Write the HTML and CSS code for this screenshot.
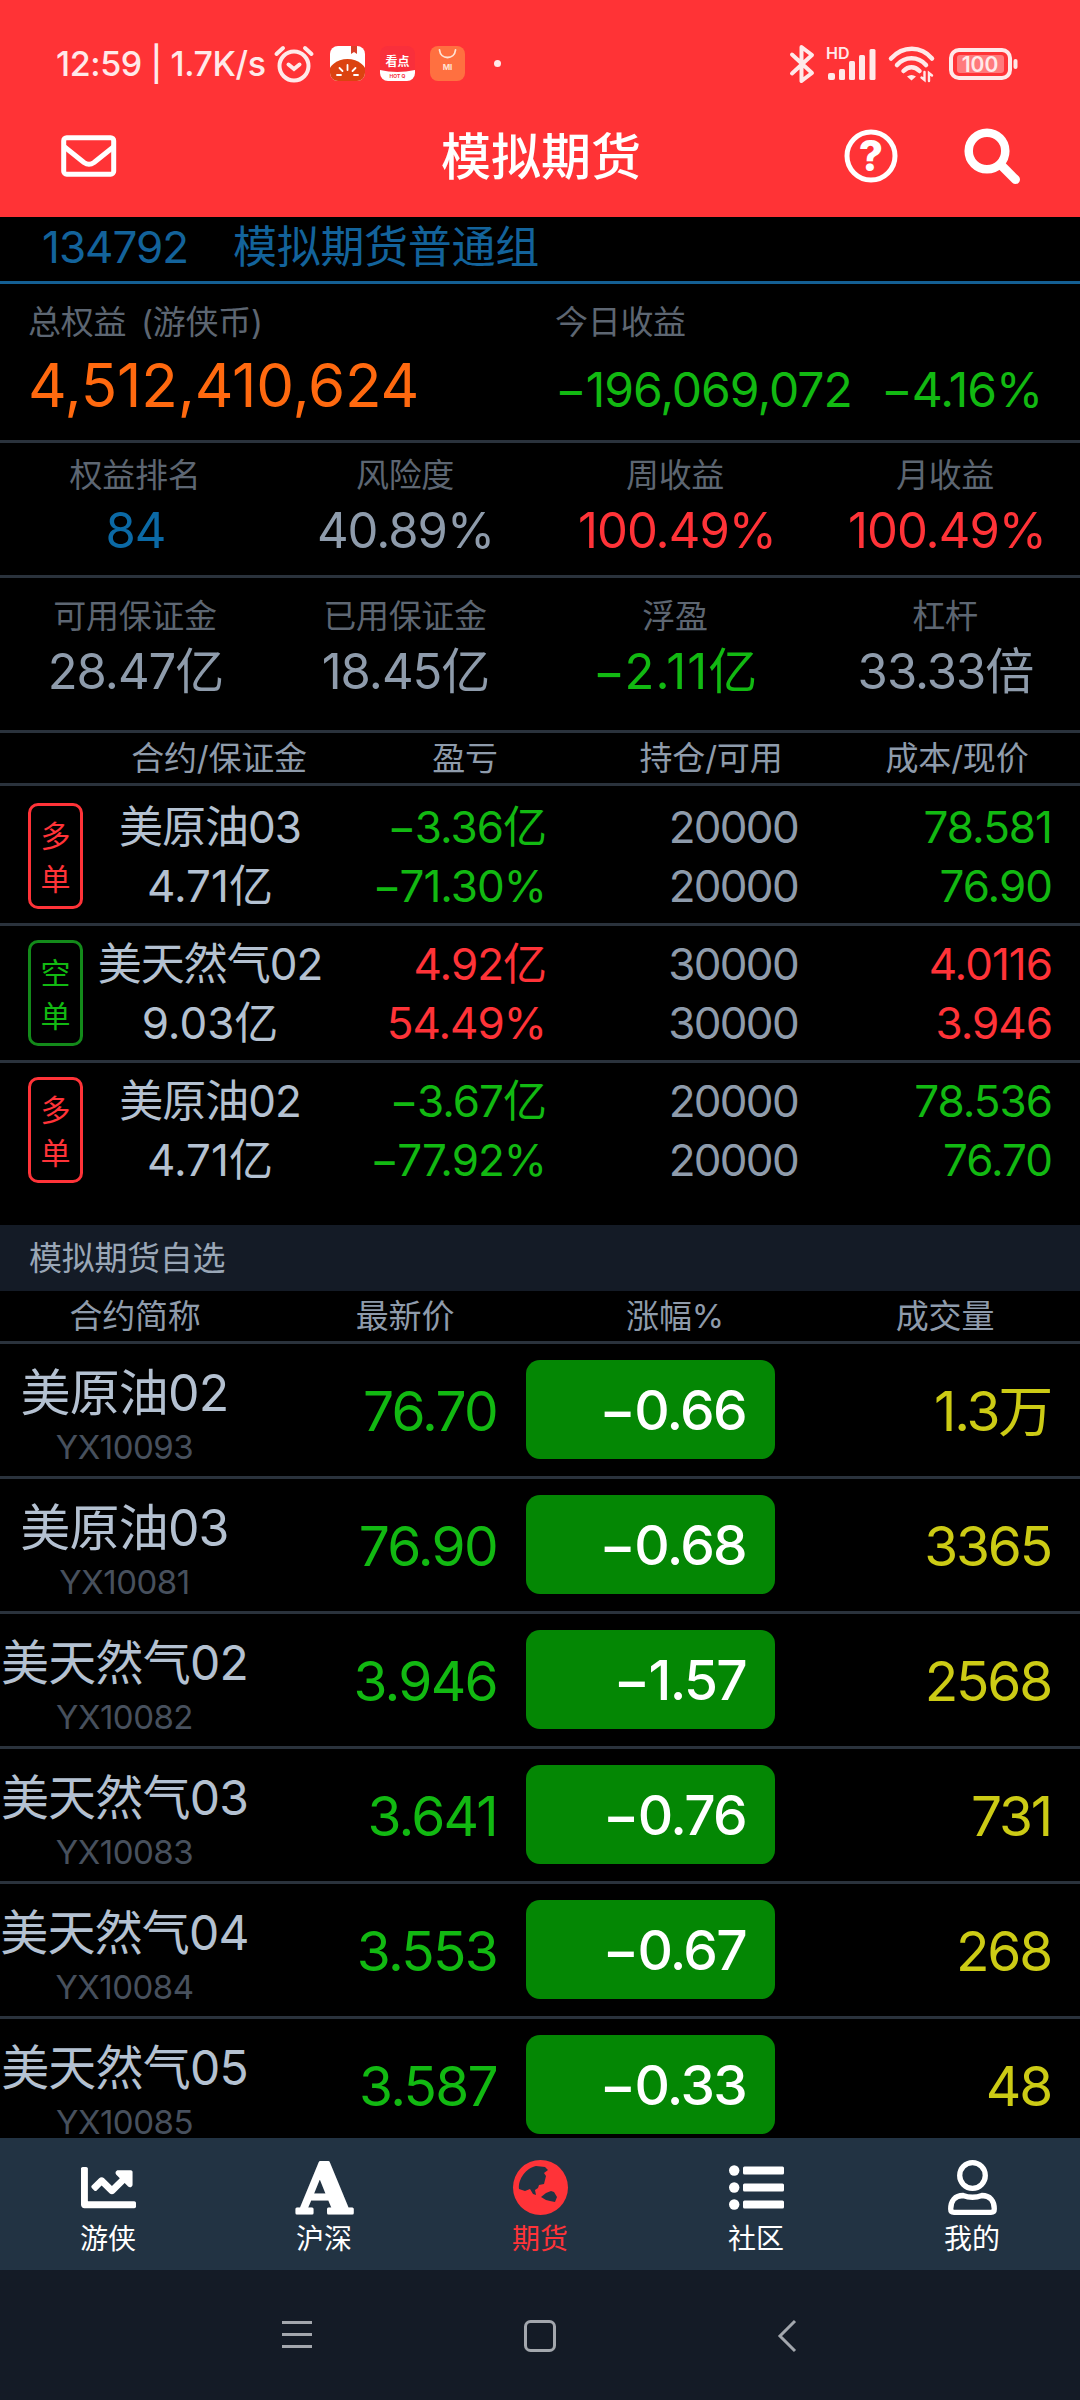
FILE: index.html
```html
<!DOCTYPE html>
<html lang="zh-CN">
<head>
  <meta charset="UTF-8" />
  <meta name="viewport" content="width=device-width, initial-scale=1" />
  <title>模拟期货</title>
  <link rel="stylesheet" href="styles.css">
</head>
<body>
  <header class="top">
    <div class="status">
      <span class="clock">12:59 | 1.7K/s</span>
      <svg class="alarm" width="40" height="38" viewBox="0 0 40 38" fill="none" stroke="#ffe9e9" stroke-width="4" stroke-linecap="round">
        <circle cx="20" cy="21" r="14.5" />
        <path d="M14.5 19.5l5.5 4.5 5.5-4.5M2.5 9L9 3M37.5 9L31 3" />
      </svg>
      <svg class="app" width="35" height="35" viewBox="0 0 35 35">
        <defs><clipPath id="round"><rect width="35" height="35" rx="8" /></clipPath></defs>
        <g clip-path="url(#round)">
          <rect width="35" height="35" fill="#fff" />
          <path d="M21 0h6v8l-3-2-3 2z" fill="#d8402a" />
          <ellipse cx="17.5" cy="30" rx="20" ry="17" fill="#dc4310" />
          <path d="M17.5 24v-5M12.500 25l-3-3M22.500 25l3-3M11 29H7M24 29h4" stroke="#fff" stroke-width="1.800" stroke-linecap="round" />
        </g>
      </svg>
      <svg class="app" width="35" height="35" viewBox="0 0 35 35">
        <g clip-path="url(#round)">
          <rect width="35" height="35" fill="#f92f3b" />
          <path d="M0 24q17 4 35 0v11H0z" fill="#fff" />
          <text x="17.500" y="20" class="app-name">看点</text>
          <text x="17.500" y="32" class="app-sub">HOT Q</text>
        </g>
      </svg>
      <svg class="app" width="35" height="35" viewBox="0 0 35 35">
        <rect width="35" height="35" rx="8" fill="#ff7040" />
        <path d="M9.500 4c1 10 15 10 16 0" fill="none" stroke="#ffe3d4" stroke-width="1.800" stroke-linecap="round" />
        <text x="17.500" y="24" class="app-mi">MI</text>
      </svg>
      <i class="dot"></i>
      <svg class="bt" width="26" height="40" viewBox="0 0 26 40" fill="none" stroke="#ffe9e9" stroke-width="4" stroke-linejoin="round" stroke-linecap="round">
        <path d="M3 10.500l20 18.500-10.500 8V3L23 11 3 29.500" />
      </svg>
      <svg class="signal" width="52" height="36" viewBox="0 0 52 36" fill="#ffe9e9">
        <text x="0" y="13" class="hd">HD</text>
        <rect x="2" y="27" width="7" height="7" rx="2" />
        <rect x="13" y="23" width="6" height="11" rx="1.500" />
        <rect x="23" y="15" width="6" height="19" rx="1.500" />
        <rect x="33" y="9" width="6" height="25" rx="1.500" />
        <rect x="43.500" y="3" width="6" height="31" rx="1.500" />
      </svg>
      <svg class="wifi" width="48" height="38" viewBox="0 0 48 38" fill="none" stroke="#ffe9e9" stroke-width="4.500" stroke-linecap="round">
        <path d="M3 13.500c12-13 30-13 41 0M9 20c8-9 21-9 29 0M15.500 26c5-5 11-5 16 0" />
        <path d="M19 31.500q4.500-3 9 0l-4.500 4z" fill="#ffe9e9" stroke="none" />
        <path d="M36.500 27v8l-3-2.500M41 36v-8l3 2.500" stroke-width="2.400" />
      </svg>
      <svg class="battery" width="70" height="32" viewBox="0 0 70 32">
        <rect x="2" y="2" width="59" height="28" rx="8" fill="none" stroke="#ffe9e9" stroke-width="4" />
        <rect x="8" y="7" width="47" height="18" rx="3" fill="#ff7a7c" />
        <text x="31" y="23.800" class="level">100</text>
        <rect x="64.500" y="11" width="4" height="10" rx="2" fill="#ffe9e9" />
      </svg>
    </div>
    <div class="titlebar">
      <svg class="mail" width="56" height="42" viewBox="0 0 56 42" fill="none" stroke="#fff" stroke-width="5" stroke-linejoin="round">
        <rect x="2.700" y="2.700" width="50" height="36.500" rx="3" />
        <path d="M3 11.500l20 16q5 3.500 10 0l20-16" />
      </svg>
      <h1>模拟期货</h1>
      <svg class="help" width="54" height="54" viewBox="0 0 54 54">
        <circle cx="27" cy="27" r="24" fill="none" stroke="#fff" stroke-width="5" />
        <text x="27" y="42" class="mark">?</text>
      </svg>
      <svg class="search" width="56" height="56" viewBox="0 0 56 56" fill="none" stroke="#fff">
        <circle cx="23" cy="23" r="18.300" stroke-width="8.500" />
        <path d="M37 37l14.500 14.500" stroke-width="9" stroke-linecap="round" />
      </svg>
    </div>
  </header>

  <main>
    <div class="group"><span class="uid">134792</span><span>模拟期货普通组</span></div>

    <section class="total">
      <div class="equity">
        <label>总权益 (游侠币)</label>
        <b class="orange">4,512,410,624</b>
      </div>
      <div class="today">
        <label>今日收益</label>
        <p class="green"><span class="amount">−196,069,072</span><span>−4.16%</span></p>
      </div>
    </section>

    <section class="stats">
      <div><label>权益排名</label><b class="blue">84</b></div>
      <div><label>风险度</label><b>40.89%</b></div>
      <div><label>周收益</label><b class="red">100.49%</b></div>
      <div><label>月收益</label><b class="red">100.49%</b></div>
    </section>
    <section class="stats margin">
      <div><label>可用保证金</label><b>28.47亿</b></div>
      <div><label>已用保证金</label><b>18.45亿</b></div>
      <div><label>浮盈</label><b class="green">−2.11亿</b></div>
      <div><label>杠杆</label><b>33.33倍</b></div>
    </section>

    <div class="pos-head">
      <span>合约/保证金</span><span>盈亏</span><span>持仓/可用</span><span>成本/现价</span>
    </div>
    <section class="positions">
      <div class="pos">
        <div class="side red">多<br>单</div>
        <div class="name">美原油03<br><span>4.71亿</span></div>
        <div class="green">−3.36亿<br>−71.30%</div>
        <div class="qty">20000<br>20000</div>
        <div class="green">78.581<br>76.90</div>
      </div>
      <div class="pos">
        <div class="side green">空<br>单</div>
        <div class="name">美天然气02<br><span>9.03亿</span></div>
        <div class="red">4.92亿<br>54.49%</div>
        <div class="qty">30000<br>30000</div>
        <div class="red">4.0116<br>3.946</div>
      </div>
      <div class="pos">
        <div class="side red">多<br>单</div>
        <div class="name">美原油02<br><span>4.71亿</span></div>
        <div class="green">−3.67亿<br>−77.92%</div>
        <div class="qty">20000<br>20000</div>
        <div class="green">78.536<br>76.70</div>
      </div>
    </section>

    <h2>模拟期货自选</h2>
    <div class="watch-head">
      <span>合约简称</span><span>最新价</span><span>涨幅%</span><span>成交量</span>
    </div>
    <section class="watch">
      <div class="row">
        <div class="contract"><b>美原油02</b><small>YX10093</small></div>
        <span class="price">76.70</span><span class="change">−0.66</span><span class="volume">1.3万</span>
      </div>
      <div class="row">
        <div class="contract"><b>美原油03</b><small>YX10081</small></div>
        <span class="price">76.90</span><span class="change">−0.68</span><span class="volume">3365</span>
      </div>
      <div class="row">
        <div class="contract long"><b>美天然气02</b><small>YX10082</small></div>
        <span class="price">3.946</span><span class="change">−1.57</span><span class="volume">2568</span>
      </div>
      <div class="row">
        <div class="contract long"><b>美天然气03</b><small>YX10083</small></div>
        <span class="price">3.641</span><span class="change">−0.76</span><span class="volume">731</span>
      </div>
      <div class="row">
        <div class="contract long"><b>美天然气04</b><small>YX10084</small></div>
        <span class="price">3.553</span><span class="change">−0.67</span><span class="volume">268</span>
      </div>
      <div class="row">
        <div class="contract long"><b>美天然气05</b><small>YX10085</small></div>
        <span class="price">3.587</span><span class="change">−0.33</span><span class="volume">48</span>
      </div>
    </section>
  </main>

  <nav class="tabs">
    <a>
      <svg width="55" height="55" viewBox="0 0 512 512" fill="currentColor"><path d="M496 384H64V80c0-8.840-7.160-16-16-16H16C7.160 64 0 71.160 0 80v336c0 17.670 14.330 32 32 32h464c8.840 0 16-7.160 16-16v-32c0-8.840-7.160-16-16-16zM464 96H345.940c-21.380 0-32.090 25.850-16.970 40.970l32.400 32.400L288 242.750l-73.370-73.370c-12.500-12.500-32.760-12.500-45.250 0l-68.690 68.690c-6.250 6.250-6.250 16.380 0 22.630l22.620 22.620c6.250 6.250 16.380 6.250 22.630 0L192 237.250l73.370 73.370c12.500 12.500 32.760 12.500 45.250 0l96-96 32.400 32.400c15.120 15.120 40.970 4.410 40.970-16.970V112c.010-8.840-7.150-16-15.990-16z" /></svg>
      <span>游侠</span>
    </a>
    <a>
      <svg width="57" height="55" viewBox="0 0 57 55"><text x="28.500" y="53" class="letter" textLength="54" lengthAdjust="spacingAndGlyphs">A</text></svg>
      <span>沪深</span>
    </a>
    <a class="active">
      <svg width="55" height="55" viewBox="0 0 55 55">
        <circle cx="27.500" cy="27.500" r="27.500" fill="currentColor" />
        <path d="M6 29C5 19 13 8 23 6l9 1 3 3-4 3 2 3-2 8-5 1-1 3-3 2 1 5-3-1-3-5-5 2z" fill="#223343" />
        <path d="M28 37l5-4 5-2 3 1 3 5-2 5-5-1-4-1z" fill="#223343" />
      </svg>
      <span>期货</span>
    </a>
    <a>
      <svg width="55" height="55" viewBox="0 0 55 55" fill="currentColor">
        <circle cx="5.200" cy="10.500" r="5.200" /><circle cx="5.200" cy="27.500" r="5.200" /><circle cx="5.200" cy="44.500" r="5.200" />
        <rect x="14" y="6.500" width="41" height="8" rx="1.500" /><rect x="14" y="23.500" width="41" height="8" rx="1.500" /><rect x="14" y="40.500" width="41" height="8" rx="1.500" />
      </svg>
      <span>社区</span>
    </a>
    <a>
      <svg width="49" height="55" viewBox="0 0 49 55" fill="none" stroke="currentColor" stroke-width="5.300">
        <circle cx="24.500" cy="15.500" r="12.800" />
        <path d="M15 35.500q9.500 3.500 19 0c8 0 12.300 5.500 12.300 13.500q0 3.300-3.300 3.300H6q-3.300 0-3.300-3.300c0-8 4.300-13.500 12.300-13.500z" />
      </svg>
      <span>我的</span>
    </a>
  </nav>

  <footer class="keys">
    <svg width="32" height="32" viewBox="0 0 32 32" fill="none" stroke="#a3a7ad" stroke-width="3"><path d="M2 3.500h30M2 15.500h30M2 27.500h30" /></svg>
    <svg width="34" height="34" viewBox="0 0 34 34" fill="none" stroke="#a3a7ad" stroke-width="3"><rect x="2.500" y="2.500" width="29" height="29" rx="5" /></svg>
    <svg width="32" height="34" viewBox="0 0 32 34" fill="none" stroke="#a3a7ad" stroke-width="3"><path d="M27 2L12 17l15 15" /></svg>
  </footer>
</body>
</html>
```
FILE: styles.css
```css
* {
  box-sizing: border-box;
}

body {
  display: flex;
  flex-direction: column;
  width: 1080px;
  height: 2400px;
  margin: 0;
  overflow: hidden;
  background: #000;
  color: #8e9bab;
  font-family: Inter, "Noto Sans CJK SC", sans-serif;
}

b,
h1,
h2 {
  margin: 0;
  font-weight: 400;
}

p {
  margin: 0;
}

svg {
  display: block;
  flex: none;
  overflow: visible;
}

.red {
  color: #ff3338;
}

.green {
  color: #12b912;
}

.blue {
  color: #0b69a5;
}

.orange {
  color: #ff690f;
}

/* header */
.top {
  height: 217px;
  background: #ff3336;
  color: #fff;
}

.status {
  display: flex;
  align-items: center;
  height: 127px;
  padding-left: 56px;
}

.clock {
  width: 218px;
  font-size: 34px;
  font-weight: 500;
  letter-spacing: -0.4px;
  white-space: nowrap;
  color: #ffe9e9;
}

.alarm {
  margin-right: 16px;
}

.app {
  margin-right: 15px;
}

.app text,
.hd,
.level,
.mark,
.letter {
  text-anchor: middle;
  font-family: Inter, "Noto Sans CJK SC", sans-serif;
}

.app .app-name {
  font-size: 12px;
  font-weight: 700;
  fill: #fff;
}

.app .app-sub {
  font-size: 5px;
  font-weight: 700;
  fill: #f92f3b;
}

.app .app-mi {
  font-size: 8px;
  font-weight: 700;
  fill: #ffe3d4;
}

.dot {
  width: 7px;
  height: 7px;
  margin-left: 14px;
  border-radius: 50%;
  background: #ffe9e9;
}

.bt {
  margin-left: auto;
}

.signal {
  margin-left: 11px;
}

.signal .hd {
  text-anchor: start;
  font-size: 16px;
  font-weight: 600;
}

.wifi {
  margin-left: 10px;
}

.battery {
  margin: 0 61px 0 13px;
}

.level {
  font-size: 21px;
  font-weight: 600;
  fill: #ffe9e9;
}

.titlebar {
  display: flex;
  align-items: center;
  height: 58px;
  padding: 0 60px 0 61px;
}

h1 {
  flex: 1;
  padding: 1px 0 0 121px;
  text-align: center;
  font-size: 50px;
  font-weight: 500;
  line-height: 58px;
}

.help {
  margin-right: 66px;
}

.mark {
  font-size: 42px;
  font-weight: 800;
  fill: #fff;
}

/* content */
main {
  flex: 1;
  min-height: 0;
  overflow: hidden;
}

label {
  display: block;
  color: #5d6672;
  font-size: 33px;
  line-height: 40px;
  white-space: pre;
  letter-spacing: -0.3px;
}

.group {
  height: 67px;
  padding-left: 42px;
  border-bottom: 3px solid #145f93;
  color: #13639b;
  font-size: 44px;
  line-height: 60px;
  letter-spacing: -0.3px;
}

.uid {
  display: inline-block;
  width: 191px;
  letter-spacing: -1px;
}

.total {
  display: flex;
  height: 159px;
  padding-top: 18px;
  border-bottom: 3px solid #2a323c;
}

.equity {
  width: 555px;
  padding-left: 28px;
}

.equity label {
  word-spacing: 6px;
}

.equity b {
  display: block;
  font-size: 60px;
  line-height: 86px;
  letter-spacing: -0.2px;
}

.today p {
  font-size: 48px;
  line-height: 96px;
  letter-spacing: -1px;
}

.amount {
  display: inline-block;
  width: 326px;
}

.stats {
  display: grid;
  grid-template-columns: repeat(4, 1fr);
  height: 135px;
  padding-top: 12px;
  border-bottom: 3px solid #2a323c;
  text-align: center;
}

.stats.margin {
  height: 155px;
  padding-top: 18px;
}

.stats b {
  display: block;
  padding-left: 1px;
  font-size: 49px;
  line-height: 72px;
  letter-spacing: -1px;
}

.stats .red {
  padding-left: 4px;
}

.stats .green {
  letter-spacing: 1px;
}

.pos-head,
.watch-head {
  display: grid;
  grid-template-columns: repeat(4, 1fr);
  border-bottom: 3px solid #2a323c;
  text-align: center;
  font-size: 33px;
  line-height: 51px;
  letter-spacing: -0.2px;
}

.pos-head {
  height: 53px;
  padding-left: 96px;
}

.positions {
  height: 439px;
  padding-top: 3px;
}

.pos {
  display: grid;
  grid-template-columns: 55px 254px 209px 252px 254px;
  height: 137px;
  padding: 9px 0 0 28px;
  border-bottom: 3px solid #2a323c;
  text-align: right;
  font-size: 44px;
  line-height: 59px;
  letter-spacing: -1px;
}

.pos:last-child {
  border-bottom: 0;
}

.pos .side {
  height: 106px;
  margin-top: 5px;
  padding-top: 9px;
  border: 3px solid;
  border-radius: 10px;
  text-align: center;
  font-size: 30px;
  line-height: 43px;
  letter-spacing: 0;
}

.side.green {
  border-color: #138a1a;
}

.pos .name {
  text-align: center;
  color: #b4c1d1;
}

.name span {
  letter-spacing: 0;
}

.pos .qty {
  letter-spacing: -1.7px;
}

h2 {
  height: 66px;
  padding-left: 29px;
  background: #141b26;
  color: #9aa7b7;
  font-size: 33px;
  line-height: 67px;
  letter-spacing: -0.3px;
}

.watch-head {
  height: 53px;
}

.row {
  display: grid;
  grid-template-columns: 249px 248px 247px 307px;
  height: 135px;
  border-bottom: 3px solid #2a323c;
  text-align: right;
  font-size: 55px;
  line-height: 135px;
  letter-spacing: -1.7px;
}

.contract {
  padding-top: 19px;
  text-align: center;
  letter-spacing: -0.8px;
}

.contract b {
  display: block;
  color: #b4c1d1;
  font-size: 50px;
  line-height: 60px;
  white-space: nowrap;
}

.contract.long b {
  font-size: 48px;
}

.contract small {
  display: block;
  color: #47505d;
  font-size: 33px;
  line-height: 49px;
  letter-spacing: -0.5px;
}

.price {
  color: #12b912;
}

.change {
  height: 99px;
  margin: 16px -31px 0 29px;
  padding-right: 29px;
  border-radius: 14px;
  background: #048704;
  color: #fff;
  font-weight: 500;
  line-height: 101px;
}

.volume {
  color: #cccb15;
  letter-spacing: -2.2px;
}

/* bottom bars */
.tabs {
  display: flex;
  height: 132px;
  background: #223343;
}

.tabs a {
  display: flex;
  flex: 1;
  flex-direction: column;
  align-items: center;
  padding-top: 22px;
  color: #fff;
  font-size: 28px;
  line-height: 48px;
}

.tabs .active {
  color: #ff3338;
}

.letter {
  font-family: "DejaVu Serif", serif;
  font-size: 70px;
  font-weight: 700;
  fill: #fff;
  stroke: #fff;
  stroke-width: 3px;
  stroke-linejoin: round;
}

.keys {
  display: flex;
  justify-content: center;
  gap: 211px;
  height: 130px;
  padding-top: 49px;
  background: #141b26;
}
```
